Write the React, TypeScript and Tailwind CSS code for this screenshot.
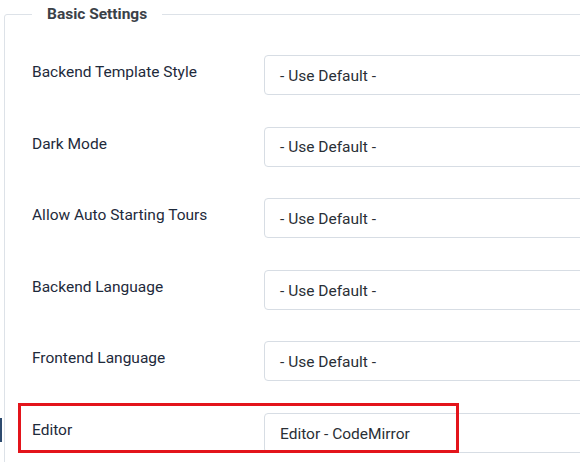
import React from "react";

const rows = [
  { label: "Backend Template Style", value: "- Use Default -" },
  { label: "Dark Mode", value: "- Use Default -" },
  { label: "Allow Auto Starting Tours", value: "- Use Default -" },
  { label: "Backend Language", value: "- Use Default -" },
  { label: "Frontend Language", value: "- Use Default -" },
  { label: "Editor", value: "Editor - CodeMirror" },
];

export default function App() {
  return (
    <div
      className="relative w-[580px] h-[462px] overflow-hidden bg-white"
      style={{ fontFamily: "Roboto, 'Liberation Sans', sans-serif" }}
    >
      <fieldset className="ml-[4px] mt-[2px] w-[640px] border border-[#dde2e8] rounded-[3px] pl-[27px] pt-[29px] pb-[20px]">
        <legend className="px-[15px] text-[15.5px] leading-[24px] font-bold text-[#3b4148]">
          Basic Settings
        </legend>
        <div className="flex flex-col gap-[31.6px]">
          {rows.map((r) => (
            <div key={r.label} className="flex items-start">
              <div className="w-[232px] pt-[5px] text-[15.5px] leading-[24px] text-[#1e2a3b]">
                {r.label}
              </div>
              <div className="h-[40px] w-[400px] border border-[#d7dde4] rounded-[4px] pl-[15px] pt-[3px] flex items-center text-[15.5px] text-[#2a2f36]">
                {r.value}
              </div>
            </div>
          ))}
        </div>
      </fieldset>
      <div className="absolute left-0 top-[418px] w-[2px] h-[24px] bg-[#2d4a6e]" />
      <div className="absolute left-[18px] top-[403px] w-[441px] h-[50px] border-[3px] border-[#e3141b]" />
    </div>
  );
}
